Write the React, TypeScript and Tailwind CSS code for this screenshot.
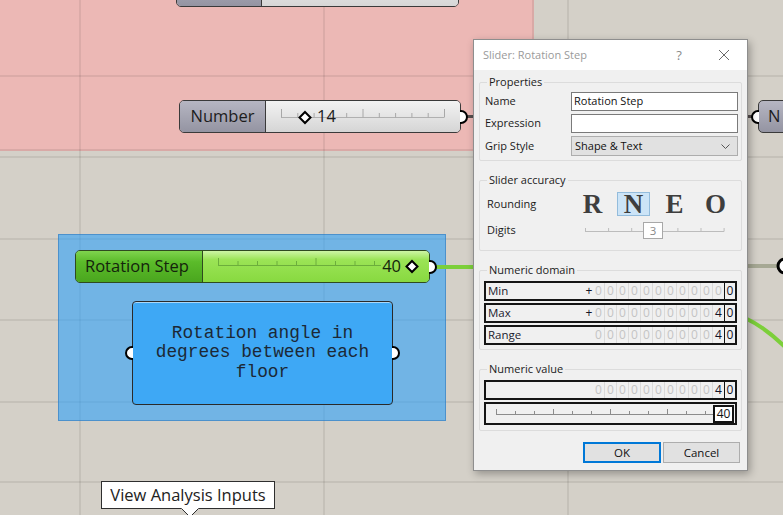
import React from "react";

function GripR() {
  return (
    <span className="absolute -right-[8px] top-1/2 -translate-y-1/2 w-[8px] h-[14px] rounded-r-full border-[2.5px] border-l-0 border-black bg-white" />
  );
}
function GripL() {
  return (
    <span className="absolute -left-[8px] top-1/2 -translate-y-1/2 w-[8px] h-[14px] rounded-l-full border-[2.5px] border-r-0 border-black bg-white" />
  );
}

function Group({ label, className, children }: { label: string; className: string; children?: React.ReactNode }) {
  return (
    <div className={"relative border border-[#dcdcdc] rounded-[2px] " + className}>
      <span className="absolute left-[7px] -top-[9px] px-[2px] bg-[#f0f0f0] leading-[16px] text-[#1b1b1b]">{label}</span>
      {children}
    </div>
  );
}

function Row({ label, children }: { label: string; children: React.ReactNode }) {
  return (
    <div className="flex items-center">
      <span className="w-[86px] shrink-0">{label}</span>
      <div className="flex-1">{children}</div>
    </div>
  );
}

function DigitCells({ four }: { four: boolean }) {
  const cells = Array.from({ length: 11 }, (_, i) => i);
  return (
    <div className="flex h-full text-[12px]">
      {cells.map((i) => {
        const dark = four && i === 10;
        return (
          <span
            key={i}
            className={`w-[12px] h-full flex items-center justify-center ${
              i === 10 ? "border-r border-[#111]" : "border-r border-[#dadada]"
            } ${dark ? "text-[#141428]" : "text-[#c4c4c4]"}`}
          >
            {dark ? "4" : "0"}
          </span>
        );
      })}
      <span className="w-[10px] h-full flex items-center justify-center text-[#141428]">0</span>
    </div>
  );
}

function DomainRow({ label, plus, four }: { label: string; plus: boolean; four: boolean }) {
  return (
    <div className="h-[20px] border-2 border-[#151515] flex items-center">
      <span className="flex-1 pl-[2px] text-[11.5px] text-[#1b1b2e]">{label}</span>
      <span className="w-[8px] text-center text-[12px] text-[#141428]">{plus ? "+" : ""}</span>
      <DigitCells four={four} />
    </div>
  );
}

export default function App() {
  const numTicks = Array.from({ length: 11 }, (_, i) => i);
  const rotTicks = Array.from({ length: 9 }, (_, i) => i);
  const digitTicks = Array.from({ length: 7 }, (_, i) => i);
  const valTicks = Array.from({ length: 12 }, (_, i) => i);

  return (
    <div className="relative w-[783px] h-[515px] overflow-hidden bg-[#d4d0c8] font-['Open_Sans',sans-serif]">
      {/* pink group */}
      <div className="absolute left-0 top-0 w-[534px] h-[151px] bg-[#ecb8b5] border-b-2 border-r-2 border-[#d9a9a6]" />

      {/* grid lines */}
      <div className="absolute left-0 top-[75px] w-full h-[2px] bg-black/[0.07]" />
      <div className="absolute left-0 top-[156px] w-full h-[2px] bg-black/[0.07]" />
      <div className="absolute left-0 top-[238px] w-full h-[2px] bg-black/[0.07]" />
      <div className="absolute left-0 top-[319px] w-full h-[2px] bg-black/[0.07]" />
      <div className="absolute left-0 top-[401px] w-full h-[2px] bg-black/[0.07]" />
      <div className="absolute left-0 top-[481px] w-full h-[2px] bg-black/[0.07]" />
      <div className="absolute top-0 left-[79px] h-full w-[2px] bg-black/[0.07]" />
      <div className="absolute top-0 left-[323px] h-full w-[2px] bg-black/[0.07]" />
      <div className="absolute top-0 left-[567px] h-full w-[2px] bg-black/[0.07]" />

      {/* blue group */}
      <div className="absolute left-[58px] top-[234px] w-[388px] h-[187px] bg-[rgba(42,160,250,0.58)] border border-[rgba(40,110,180,0.5)]" />

      {/* wires */}
      <svg className="absolute left-0 top-0" width="783" height="515">
        <path d="M466 116.5 L476 116.5" stroke="#564e4e" strokeWidth="3" fill="none" />
        <path d="M745 116.5 L757 116.5" stroke="#564e4e" strokeWidth="3" fill="none" />
        <path d="M436 267 L476 267" stroke="#7ccf3a" strokeWidth="4" fill="none" />
        <path d="M745 266 L779 266" stroke="#a6a894" strokeWidth="4" fill="none" />
        <path d="M745 318 C758 324 772 334 786 348" stroke="#7ccf3a" strokeWidth="4" fill="none" />
        <path d="M785 259 A7 7 0 0 0 785 273" stroke="#000" strokeWidth="3" fill="white" />
      </svg>

      {/* top node (partially visible) */}
      <div className="absolute left-[176px] -top-[26px] w-[283px] h-[33px] flex rounded-[5px] border border-[#3a3a3a]">
        <div className="w-[85px] h-full rounded-l-[4px] bg-[linear-gradient(to_bottom,#b4b4c0,#9494a2)] border-r border-[#3a3a3a]" />
        <div className="flex-1 h-full rounded-r-[4px] bg-[linear-gradient(to_bottom,#f0f0f0,#d6d6d6)]" />
      </div>

      {/* Number slider */}
      <div className="absolute left-[179px] top-[100px] w-[282px] h-[33px] flex rounded-[5px] border border-[#3a3a3a]">
        <div className="w-[86px] h-full rounded-l-[4px] bg-[linear-gradient(to_bottom,#b6b6c2,#9494a2)] border-r border-[#3a3a3a] flex items-center justify-center text-[16.5px] text-[#1c1c1c]">
          Number
        </div>
        <div className="relative flex-1 h-full rounded-r-[4px] bg-[linear-gradient(to_bottom,#f3f3f3,#d5d5d5)]">
          <svg className="absolute left-0 top-0" width="194" height="31">
            <line x1="15" y1="16.5" x2="178" y2="16.5" stroke="#b0b0b0" strokeWidth="1" />
            {numTicks.map((i) => (
              <line
                key={i}
                x1={15.5 + i * 16.3}
                x2={15.5 + i * 16.3}
                y1={i % 5 === 0 ? 8 : 12}
                y2="16.5"
                stroke="#a8a8a8"
                strokeWidth="1"
              />
            ))}
            <path d="M39 11 L44.5 16.5 L39 22 L33.5 16.5 Z" fill="white" stroke="black" strokeWidth="2" />
          </svg>
          <span className="absolute left-[51px] top-0 h-full flex items-center text-[16.5px] text-[#1c1c1c]">14</span>
        </div>
        <GripR />
      </div>

      {/* Right N node */}
      <div className="absolute left-[758px] top-[100px] w-[60px] h-[33px] rounded-[5px] border border-[#3a3a3a] bg-[linear-gradient(to_bottom,#b6b6c2,#9494a2)] flex items-center pl-[9px] text-[16.5px] text-[#1c1c1c]">
        N
        <GripL />
      </div>

      {/* Rotation Step slider */}
      <div className="absolute left-[75px] top-[250px] w-[355px] h-[33px] flex rounded-[5px] border border-[#2f4a20]">
        <div className="w-[127px] h-full rounded-l-[4px] bg-[linear-gradient(to_bottom,#7fd44e_0%,#5bbb2a_35%,#4aa61e_100%)] border-r border-[#2f4a20] flex items-center pl-[9px] text-[16.5px] text-[#14240c]">
          Rotation Step
        </div>
        <div className="relative flex-1 h-full rounded-r-[4px] bg-[linear-gradient(to_bottom,#cdf5a5_0%,#9be456_28%,#88d940_100%)]">
          <svg className="absolute left-0 top-0" width="225" height="31">
            <line x1="15" y1="14.5" x2="178" y2="14.5" stroke="#6cae3c" strokeWidth="1" />
            {rotTicks.map((i) => (
              <line
                key={i}
                x1={15.5 + i * 19.5}
                x2={15.5 + i * 19.5}
                y1={i % 5 === 0 ? 7 : 10}
                y2="14.5"
                stroke="#6cae3c"
                strokeWidth="1"
              />
            ))}
            <path d="M209 10 L214.5 15.5 L209 21 L203.5 15.5 Z" fill="white" stroke="black" strokeWidth="2" />
          </svg>
          <span className="absolute right-[28px] top-0 h-full flex items-center text-[16.5px] text-[#14240c]">40</span>
        </div>
        <GripR />
      </div>

      {/* Panel */}
      <div className="absolute left-[132px] top-[301px] w-[261px] h-[104px] rounded-[4px] border border-[#2a2a2a] bg-[#3ea8f5] shadow-[inset_0_1px_0_rgba(255,255,255,0.55)] flex items-center justify-center text-center font-['Liberation_Mono',monospace] text-[17.8px] leading-[19.5px] text-[#1c2836]">
        <div>
          Rotation angle in
          <br />
          degrees between each
          <br />
          floor
        </div>
        <GripL />
        <GripR />
      </div>

      {/* Tooltip */}
      <div className="absolute left-[101px] top-[481px] w-[174px] h-[28px] bg-white border border-[#2e2e2e] flex items-center justify-center text-[16.5px] text-[#222]">
        View Analysis Inputs
      </div>
      <svg className="absolute left-[181px] top-[508px]" width="18" height="9">
        <path d="M0 0 L9 9 L18 0 Z" fill="white" />
        <path d="M0.5 0.5 L9 9 L17.5 0.5" fill="none" stroke="#2e2e2e" strokeWidth="1" />
      </svg>

      {/* Dialog */}
      <div className="absolute left-[473px] top-[39px] w-[275px] h-[432px] flex flex-col bg-[#f0f0f0] border border-[#8e8e8e] shadow-[2px_3px_8px_rgba(0,0,0,0.3)] text-[11px] text-[#1b1b1b]">
        <div className="h-[30px] shrink-0 bg-white flex items-center pl-[9px]">
          <span className="flex-1 text-[11px] text-[#9a9a9a]">Slider: Rotation Step</span>
          <span className="w-[10px] text-center text-[13px] text-[#8a8a8a] leading-none">?</span>
          <svg className="ml-[34px] mr-[17px]" width="12" height="12" viewBox="0 0 12 12">
            <path d="M1 1 L11 11 M11 1 L1 11" stroke="#6a6a6a" strokeWidth="1" />
          </svg>
        </div>

        <div className="flex flex-col px-[5px]">
          <Group label="Properties" className="mt-[12px] h-[79px] pt-[9px] pl-[5px] pr-[3px] flex flex-col gap-[3px]">
            <Row label="Name">
              <div className="h-[19px] border border-[#7a7a7a] bg-white px-[2px] flex items-center text-[#111]">Rotation Step</div>
            </Row>
            <Row label="Expression">
              <div className="h-[19px] border border-[#7a7a7a] bg-white" />
            </Row>
            <Row label="Grip Style">
              <div className="h-[20px] border border-[#adadad] bg-[#e1e1e1] pl-[3px] pr-[7px] flex items-center justify-between text-[#111]">
                <span>Shape &amp; Text</span>
                <svg width="9" height="5" viewBox="0 0 9 5">
                  <path d="M0.5 0.5 L4.5 4.5 L8.5 0.5" fill="none" stroke="#555" strokeWidth="1" />
                </svg>
              </div>
            </Row>
          </Group>

          <Group label="Slider accuracy" className="mt-[19px] h-[71px] pt-[11px] flex flex-col">
            <div className="flex items-center h-[24px]">
              <span className="w-[96px] pl-[7px] shrink-0">Rounding</span>
              <div className="flex gap-[8px] font-['Liberation_Serif',serif] font-bold text-[27px] text-[#3e3e3e]">
                <span className="w-[33px] h-[24px] flex items-center justify-center">R</span>
                <span className="w-[33px] h-[24px] flex items-center justify-center bg-[#cce4f7] border border-[#93bcdc]">N</span>
                <span className="w-[33px] h-[24px] flex items-center justify-center">E</span>
                <span className="w-[33px] h-[24px] flex items-center justify-center">O</span>
              </div>
            </div>
            <div className="flex items-center h-[17px] mt-[6px]">
              <span className="w-[105px] pl-[7px] shrink-0">Digits</span>
              <div className="relative w-[140px] h-[17px]">
                <svg className="absolute left-0 top-0" width="140" height="17">
                  <line x1="0" y1="9.5" x2="139" y2="9.5" stroke="#bcbcbc" strokeWidth="1" />
                  {digitTicks.map((i) => (
                    <line
                      key={i}
                      x1={0.5 + i * 23.1}
                      x2={0.5 + i * 23.1}
                      y1="6"
                      y2="9.5"
                      stroke="#bcbcbc"
                      strokeWidth="1"
                    />
                  ))}
                </svg>
                <span className="absolute left-[58px] top-0 w-[20px] h-[17px] bg-white border border-[#a8a8a8] flex items-center justify-center text-[11.5px] text-[#8a8a8a]">
                  3
                </span>
              </div>
            </div>
          </Group>

          <Group label="Numeric domain" className="mt-[19px] h-[80px] pt-[10px] px-[4px] flex flex-col gap-[2px]">
            <DomainRow label="Min" plus={true} four={false} />
            <DomainRow label="Max" plus={true} four={true} />
            <DomainRow label="Range" plus={false} four={true} />
          </Group>

          <Group label="Numeric value" className="mt-[19px] h-[62px] pt-[10px] px-[4px] flex flex-col gap-[2px]">
            <DomainRow label="" plus={false} four={true} />
            <div className="h-[23px] border-2 border-[#151515] flex items-center">
              <svg className="ml-[10px]" width="220" height="19">
                <line x1="0" y1="10.5" x2="218" y2="10.5" stroke="#8c8c8c" strokeWidth="1" />
                {valTicks.map((i) => (
                  <line
                    key={i}
                    x1={0.5 + i * 19}
                    x2={0.5 + i * 19}
                    y1={i % 3 === 0 ? 5 : 7}
                    y2="10.5"
                    stroke="#8c8c8c"
                    strokeWidth="1"
                  />
                ))}
              </svg>
              <span className="ml-auto mr-[1px] w-[21px] h-[18px] border-2 border-[#111] bg-white flex items-center justify-center text-[12px] text-[#111]">
                40
              </span>
            </div>
          </Group>

          <div className="mt-[11px] flex justify-end gap-[2px] pr-[2px]">
            <button className="w-[78px] h-[21px] border-2 border-[#0078d7] bg-[#e1e1e1] text-[11.5px] text-[#111]">OK</button>
            <button className="w-[77px] h-[21px] border border-[#adadad] bg-[#e1e1e1] text-[11.5px] text-[#111]">Cancel</button>
          </div>
        </div>
      </div>
    </div>
  );
}
